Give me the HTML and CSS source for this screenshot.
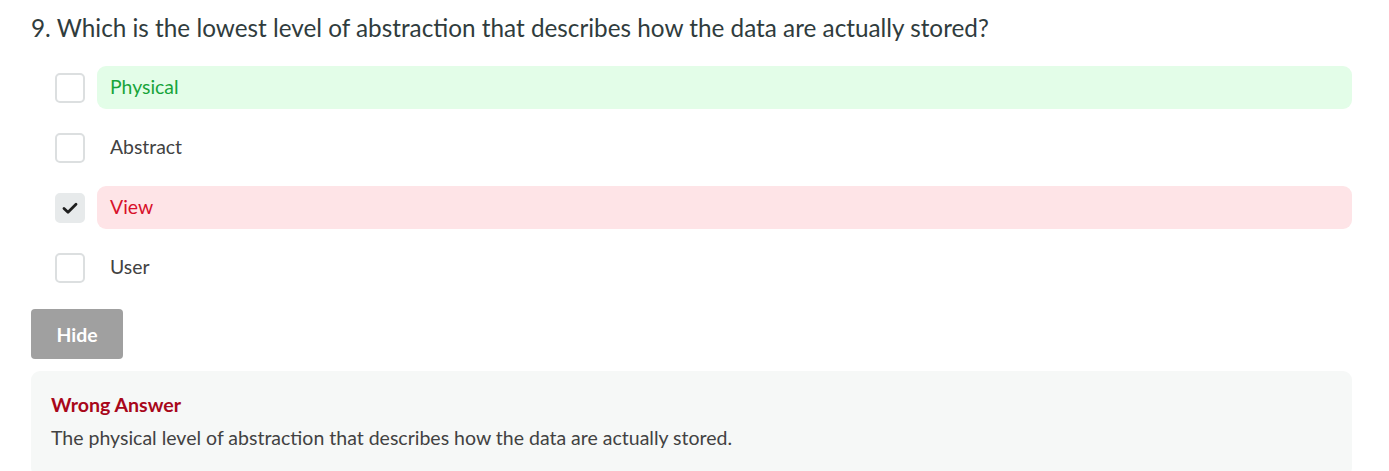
FILE: index.html
```html
<!DOCTYPE html>
<html>
<head>
<meta charset="utf-8">
<link rel="stylesheet" href="styles.css">
</head>
<body>
<div class="quiz">
  <h2 class="question">9. Which is the lowest level of abstraction that describes how the data are actually stored?</h2>
  <div class="options">
    <div class="option">
      <span class="box"></span>
      <span class="label correct">Physical</span>
    </div>
    <div class="option">
      <span class="box"></span>
      <span class="label">Abstract</span>
    </div>
    <div class="option">
      <span class="box checked"><svg width="18" height="18" viewBox="0 0 18 18"><path d="M3 9.5 L7 13.2 L15 5.3" fill="none" stroke="#1e1e1e" stroke-width="2.8" stroke-linecap="round" stroke-linejoin="round"/></svg></span>
      <span class="label wrong">View</span>
    </div>
    <div class="option">
      <span class="box"></span>
      <span class="label">User</span>
    </div>
  </div>
  <button class="hide-btn">Hide</button>
  <div class="explain">
    <div class="explain-title">Wrong Answer</div>
    <div class="explain-text">The physical level of abstraction that describes how the data are actually stored.</div>
  </div>
</div>
</body>
</html>
```
FILE: styles.css
```css
html, body {
  margin: 0;
  padding: 0;
  background: #fff;
}
body {
  font-family: Lato, "Open Sans", sans-serif;
  color: #333;
}
.quiz {
  padding: 12px 37px 0 31px;
}
.question {
  margin: 0;
  font-size: 24.3px;
  font-weight: 400;
  line-height: 32px;
  color: #303c3d;
}
.options {
  margin-top: 22px;
  display: flex;
  flex-direction: column;
  gap: 17px;
}
.option {
  display: flex;
  align-items: center;
  gap: 12px;
  padding-left: 24px;
}
.box {
  width: 26px;
  height: 26px;
  border: 2px solid #dcdfe0;
  border-radius: 5px;
  flex: none;
  display: flex;
  align-items: center;
  justify-content: center;
  background: #fff;
}
.box.checked {
  background: #e7eaeb;
  border-color: #e7eaeb;
}
.label {
  flex: 1;
  height: 43px;
  line-height: 41px;
  padding-left: 13px;
  padding-bottom: 2px;
  box-sizing: border-box;
  border-radius: 9px;
  font-size: 19.4px;
  color: #424242;
}
.label.correct {
  background: #e3fde8;
  color: #17a43a;
}
.label.wrong {
  background: #fee4e7;
  color: #d8102b;
}
.hide-btn {
  margin-top: 20px;
  width: 92px;
  height: 50px;
  border: none;
  border-radius: 4px;
  background: #a0a0a0;
  color: #fff;
  font-family: Lato, sans-serif;
  font-weight: 700;
  font-size: 19.4px;
  padding: 0;
  display: block;
}
.explain {
  margin-top: 12px;
  background: #f6f8f7;
  border-radius: 9px;
  padding: 21px 20px 26px 20px;
}
.explain-title {
  font-weight: 700;
  font-size: 19.6px;
  color: #a8071a;
  line-height: 26px;
}
.explain-text {
  margin-top: 7px;
  font-size: 19.5px;
  line-height: 26px;
  color: #424242;
}
```
